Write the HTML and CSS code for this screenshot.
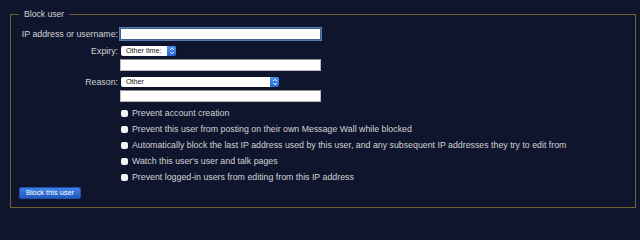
FILE: index.html
```html
<!DOCTYPE html>
<html lang="en">
<head>
<meta charset="utf-8">
<title>Block user</title>
<link rel="stylesheet" href="styles.css">
</head>
<body>
<form class="block-form">
  <fieldset class="box">
    <legend class="box-legend">Block user</legend>
    <div class="field field-target">
      <label class="field-label" for="target">IP address or username:</label>
      <input class="text-input is-focused" id="target" type="text">
    </div>
    <div class="field field-expiry">
      <label class="field-label" for="expiry">Expiry:</label>
      <span class="select select-short">
        <span class="select-value" id="expiry">Other time:</span>
        <span class="select-arrow"><svg viewBox="0 0 8 10" width="8" height="10"><path d="M2.2 4 L4 2.2 L5.8 4 M2.2 6 L4 7.8 L5.8 6" fill="none" stroke="#fff" stroke-width="1"/></svg></span>
      </span>
    </div>
    <div class="field field-other">
      <span class="field-label"></span>
      <input class="text-input" type="text" aria-label="Other time">
    </div>
    <div class="field field-reason">
      <label class="field-label" for="reason">Reason:</label>
      <span class="select select-long">
        <span class="select-value" id="reason">Other</span>
        <span class="select-arrow"><svg viewBox="0 0 8 10" width="8" height="10"><path d="M2.2 4 L4 2.2 L5.8 4 M2.2 6 L4 7.8 L5.8 6" fill="none" stroke="#fff" stroke-width="1"/></svg></span>
      </span>
    </div>
    <div class="field field-other">
      <span class="field-label"></span>
      <input class="text-input" type="text" aria-label="Other reason">
    </div>
    <div class="checks">
      <label class="check"><input type="checkbox" class="check-box"><span>Prevent account creation</span></label>
      <label class="check"><input type="checkbox" class="check-box"><span>Prevent this user from posting on their own Message Wall while blocked</span></label>
      <label class="check"><input type="checkbox" class="check-box"><span>Automatically block the last IP address used by this user, and any subsequent IP addresses they try to edit from</span></label>
      <label class="check"><input type="checkbox" class="check-box"><span>Watch this user's user and talk pages</span></label>
      <label class="check"><input type="checkbox" class="check-box"><span>Prevent logged-in users from editing from this IP address</span></label>
    </div>
    <button type="button" class="submit">Block this user</button>
  </fieldset>
</form>
</body>
</html>
```
FILE: styles.css
```css
html, body {
  margin: 0;
  padding: 0;
  background: #10152e;
  height: 212px;
  overflow: hidden;
}
body {
  font-family: "Liberation Sans", Arial, Helvetica, sans-serif;
  color: #d2d2d2;
  font-size: 8.8px;
}
.block-form {
  padding: 9px 4px 0 10px;
}
.box {
  margin: 0;
  border: 1px solid #716236;
  padding: 9px 8px 8px 8px;
  min-width: 0;
}
.box-legend {
  font-size: 8.6px;
  line-height: 10px;
  padding: 0 5px;
  margin-left: 0;
  color: #d2d2d2;
}
.field {
  display: flex;
  align-items: center;
}
.field-label {
  width: 99px;
  margin-right: 2px;
  text-align: right;
  flex: none;
  line-height: 10px;
}
.text-input {
  box-sizing: border-box;
  width: 201px;
  height: 12px;
  margin: 0;
  padding: 0 2px;
  border: 1px solid #b9b9b9;
  border-top-color: #8d8d8d;
  background: #fff;
  font: inherit;
  outline: none;
}
.text-input.is-focused {
  border-color: #3e5f92;
  box-shadow: 0 0 0 1px #5a7bb0;
}
.field-expiry { margin-top: 6px; }
.field-other { margin-top: 3px; }
.field-reason { margin-top: 6px; }
.select {
  display: inline-flex;
  height: 10px;
  margin-left: 1px;
  border-radius: 2px;
  overflow: hidden;
  box-shadow: 0 0 0 0.5px rgba(0,0,0,0.3);
}
.select-short { width: 55px; }
.select-long { width: 158px; }
.select-value {
  flex: 1;
  background: #fff;
  color: #111;
  font-size: 7.2px;
  line-height: 10px;
  padding-left: 5px;
  white-space: nowrap;
}
.select-arrow {
  width: 9px;
  flex: none;
  background: linear-gradient(#4f93f5, #2466d8);
  display: flex;
  align-items: center;
  justify-content: center;
}
.select-arrow svg { display: block; }
.checks {
  margin-top: 3px;
  padding-left: 101px;
}
.check {
  display: flex;
  align-items: center;
  height: 16px;
  white-space: nowrap;
}
.check-box {
  -webkit-appearance: none;
  appearance: none;
  width: 7px;
  height: 7px;
  margin: 0 4px 0 1px;
  border-radius: 2px;
  background: #f4f4f4;
  border: none;
  flex: none;
}
.submit {
  display: block;
  margin-top: 2px;
  width: 62px;
  height: 12px;
  padding: 0;
  border: 1px solid #1d4fa8;
  border-radius: 2px;
  background: linear-gradient(#3f82e6, #2359c0);
  color: #fff;
  font-family: "Liberation Sans", Arial, sans-serif;
  font-size: 7.4px;
  line-height: 10px;
}
```
